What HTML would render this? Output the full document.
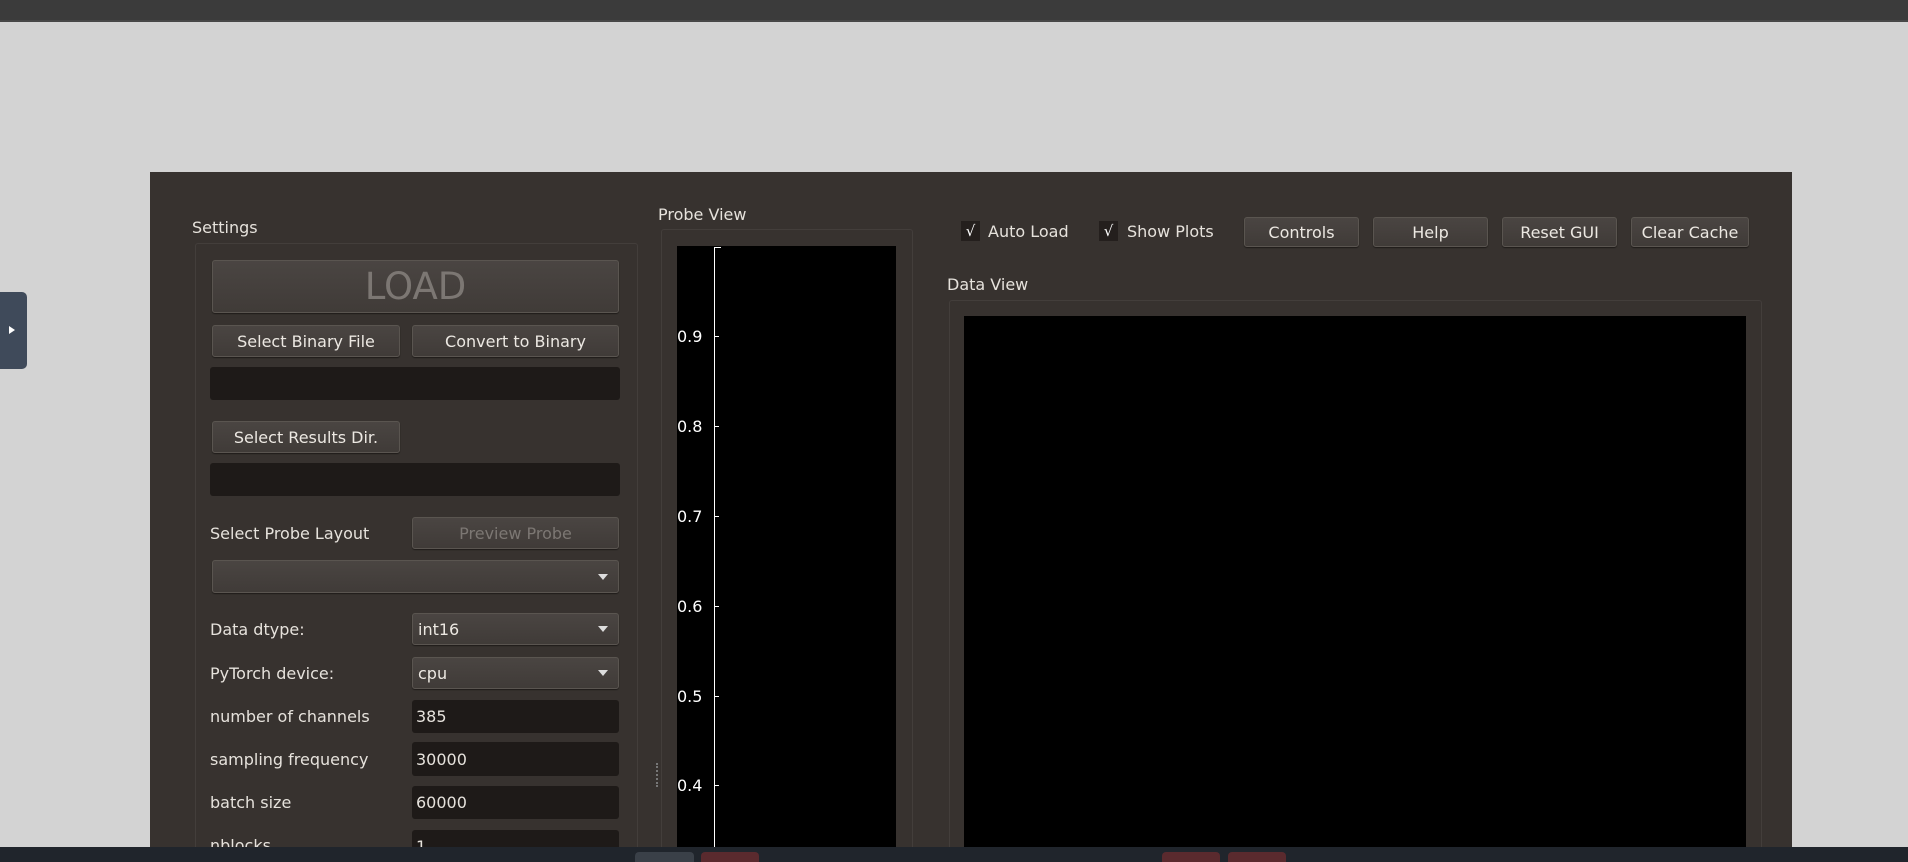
<!DOCTYPE html>
<html><head><meta charset="utf-8"><style>
*{margin:0;padding:0;box-sizing:border-box}
html,body{width:1908px;height:862px;overflow:hidden}
body{background:#d3d3d3;position:relative;font-family:"DejaVu Sans","Liberation Sans",sans-serif;font-size:16px;color:#e6e2dc}
.a{position:absolute}
.btn{position:absolute;background:linear-gradient(#4a4542,#403b38);border:1px solid #5a5550;border-radius:3px;color:#ece8e2;text-align:center;font-size:16px;box-shadow:0 1px 1px #1f1c1a}
.inp{position:absolute;background:#1e1a18;border-radius:3px;color:#e6e2dc;padding-left:4px;font-size:16px}
.lbl{position:absolute;font-size:16px;color:#e6e2dc}
.arr{position:absolute;right:10px;top:50%;margin-top:-3px;width:0;height:0;border-left:5px solid transparent;border-right:5px solid transparent;border-top:6px solid #ddd}
.tk{position:absolute;left:677px;font-size:16px;color:#fff}
.tm{position:absolute;left:714px;width:5px;height:1px;background:#fff}
</style></head><body>
<div class="a" style="left:0;top:0;width:1908px;height:20px;background:#3b3b3b"></div>
<div class="a" style="left:0;top:20px;width:1908px;height:2px;background:#474747"></div>
<div class="a" style="left:0;top:292px;width:27px;height:77px;background:#3f4a5a;border-radius:0 5px 5px 0"></div>
<div class="a" style="left:9px;top:326px;width:0;height:0;border-top:4px solid transparent;border-bottom:4px solid transparent;border-left:6px solid #fff"></div>

<div class="a" style="left:150px;top:172px;width:1642px;height:675px;background:#37322f;overflow:hidden">
<div style="position:relative;left:-150px;top:-172px;width:1908px;height:862px">
<div class="lbl" style="left:192px;top:218px">Settings</div>
<div class="a" style="left:195px;top:243px;width:443px;height:620px;border:1px solid #433e3b;border-radius:3px"></div>
<div class="btn" style="left:212px;top:260px;width:407px;height:53px;line-height:52px;font-size:37px;color:#7c7773">LOAD</div>
<div class="btn" style="left:212px;top:325px;width:188px;height:32px;line-height:31px">Select Binary File</div>
<div class="btn" style="left:412px;top:325px;width:207px;height:32px;line-height:31px">Convert to Binary</div>
<div class="inp" style="left:210px;top:367px;width:410px;height:33px"></div>
<div class="btn" style="left:212px;top:421px;width:188px;height:32px;line-height:31px">Select Results Dir.</div>
<div class="inp" style="left:210px;top:463px;width:410px;height:33px"></div>
<div class="lbl" style="left:210px;top:524px">Select Probe Layout</div>
<div class="btn" style="left:412px;top:517px;width:207px;height:32px;line-height:31px;color:#7c7773">Preview Probe</div>
<div class="btn" style="left:212px;top:560px;width:407px;height:33px"><div class="arr"></div></div>

<div class="lbl" style="left:210px;top:620px">Data dtype:</div>
<div class="btn" style="left:412px;top:613px;width:207px;height:32px;line-height:31px;text-align:left;padding-left:5px">int16<div class="arr"></div></div>
<div class="lbl" style="left:210px;top:664px">PyTorch device:</div>
<div class="btn" style="left:412px;top:657px;width:207px;height:32px;line-height:31px;text-align:left;padding-left:5px">cpu<div class="arr"></div></div>
<div class="lbl" style="left:210px;top:707px">number of channels</div>
<div class="inp" style="left:412px;top:700px;width:207px;height:33px;line-height:34px">385</div>
<div class="lbl" style="left:210px;top:750px">sampling frequency</div>
<div class="inp" style="left:412px;top:742px;width:207px;height:34px;line-height:35px">30000</div>
<div class="lbl" style="left:210px;top:793px">batch size</div>
<div class="inp" style="left:412px;top:786px;width:207px;height:33px;line-height:34px">60000</div>
<div class="lbl" style="left:210px;top:836px">nblocks</div>
<div class="inp" style="left:412px;top:830px;width:207px;height:33px;line-height:34px">1</div>

<div class="a" style="left:656px;top:763px;width:2px;height:24px;border-left:2px dotted #777"></div>

<div class="lbl" style="left:658px;top:205px">Probe View</div>
<div class="a" style="left:661px;top:229px;width:252px;height:640px;border:1px solid #433e3b;border-radius:3px"></div>
<div class="a" style="left:677px;top:246px;width:219px;height:620px;background:#000"></div>
<div class="a" style="left:714px;top:247px;width:1px;height:620px;background:#fff"></div>
<div class="a" style="left:714px;top:247px;width:7px;height:1px;background:#fff"></div>
<div class="tk" style="top:327px">0.9</div><div class="tm" style="top:336px"></div>
<div class="tk" style="top:417px">0.8</div><div class="tm" style="top:426px"></div>
<div class="tk" style="top:507px">0.7</div><div class="tm" style="top:516px"></div>
<div class="tk" style="top:597px">0.6</div><div class="tm" style="top:606px"></div>
<div class="tk" style="top:687px">0.5</div><div class="tm" style="top:696px"></div>
<div class="tk" style="top:776px">0.4</div><div class="tm" style="top:785px"></div>

<div class="a" style="left:961px;top:221px;width:19px;height:20px;background:#241f1d;color:#fff;font-size:15px;text-align:center;line-height:20px">√</div>
<div class="lbl" style="left:988px;top:222px">Auto Load</div>
<div class="a" style="left:1099px;top:221px;width:19px;height:20px;background:#241f1d;color:#fff;font-size:15px;text-align:center;line-height:20px">√</div>
<div class="lbl" style="left:1127px;top:222px">Show Plots</div>
<div class="btn" style="left:1244px;top:217px;width:115px;height:30px;line-height:29px">Controls</div>
<div class="btn" style="left:1373px;top:217px;width:115px;height:30px;line-height:29px">Help</div>
<div class="btn" style="left:1502px;top:217px;width:115px;height:30px;line-height:29px">Reset GUI</div>
<div class="btn" style="left:1631px;top:217px;width:118px;height:30px;line-height:29px">Clear Cache</div>

<div class="lbl" style="left:947px;top:275px">Data View</div>
<div class="a" style="left:949px;top:300px;width:813px;height:570px;border:1px solid #433e3b;border-radius:3px"></div>
<div class="a" style="left:964px;top:316px;width:782px;height:550px;background:#000"></div>
</div></div>

<div class="a" style="left:0;top:847px;width:1908px;height:15px;background:#20252c"></div>
<div class="a" style="left:635px;top:852px;width:59px;height:10px;background:#3a4048;border-radius:4px 4px 0 0"></div>
<div class="a" style="left:701px;top:852px;width:58px;height:10px;background:#5a2a2e;border-radius:4px 4px 0 0"></div>
<div class="a" style="left:1162px;top:852px;width:58px;height:10px;background:#5a2a2e;border-radius:4px 4px 0 0"></div>
<div class="a" style="left:1228px;top:852px;width:58px;height:10px;background:#5a2a2e;border-radius:4px 4px 0 0"></div>
</body></html>
